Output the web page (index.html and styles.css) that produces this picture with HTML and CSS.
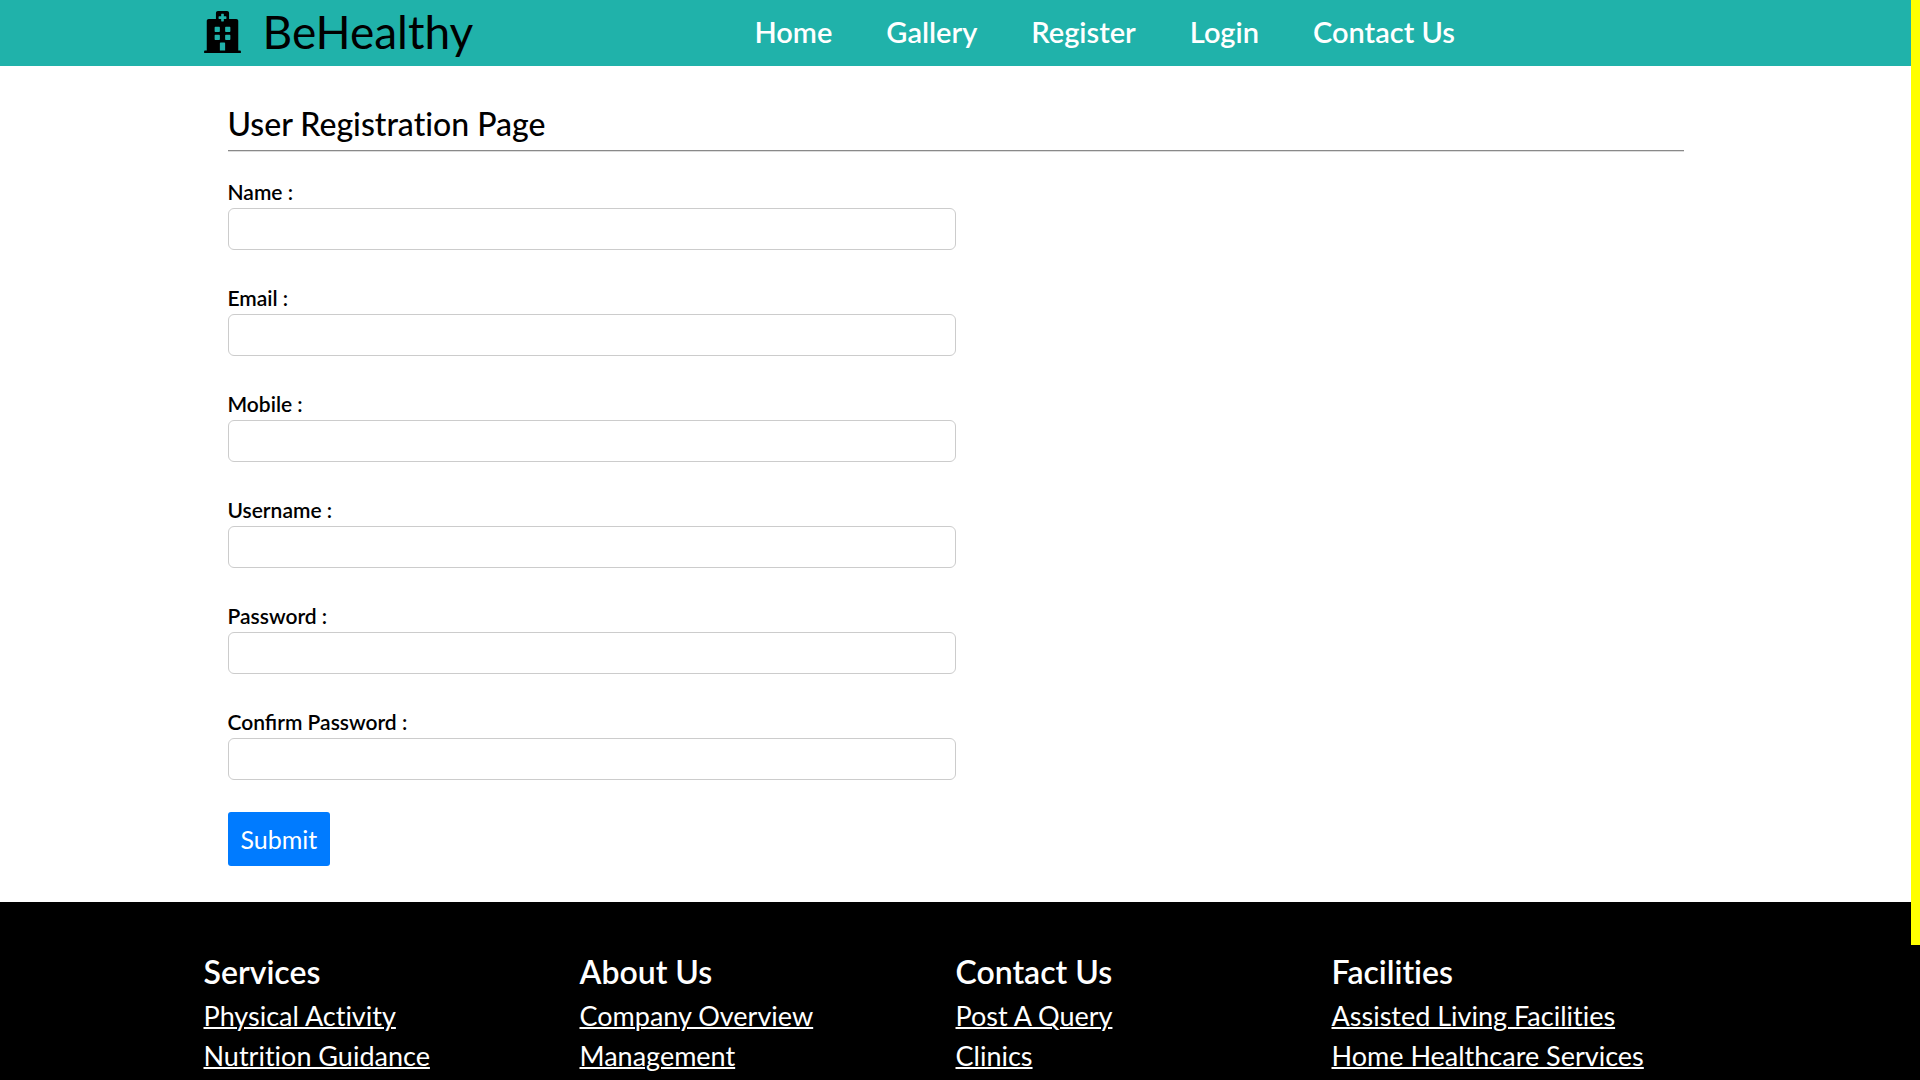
FILE: index.html
```html
<!DOCTYPE html>
<html lang="en">
<head>
<meta charset="utf-8">
<meta name="viewport" content="width=device-width, initial-scale=1">
<title>BeHealthy - Register</title>
<link rel="stylesheet" href="styles.css">
</head>
<body>
<header class="site-header">
  <div class="container header-row">
    <a class="brand" href="#">
      <svg class="brand-icon" viewBox="0 0 448 512" aria-hidden="true"><path fill="currentColor" d="M448 492v20H0v-20c0-6.627 5.373-12 12-12h20V120c0-13.255 10.745-24 24-24h88V24c0-13.255 10.745-24 24-24h112c13.255 0 24 10.745 24 24v72h88c13.255 0 24 10.745 24 24v360h20c6.627 0 12 5.373 12 12zM308 192h-40c-6.627 0-12 5.373-12 12v40c0 6.627 5.373 12 12 12h40c6.627 0 12-5.373 12-12v-40c0-6.627-5.373-12-12-12zm-168 64h40c6.627 0 12-5.373 12-12v-40c0-6.627-5.373-12-12-12h-40c-6.627 0-12 5.373-12 12v40c0 6.627 5.373 12 12 12zm104 128h-40c-6.627 0-12 5.373-12 12v84h64v-84c0-6.627-5.373-12-12-12zm64-96h-40c-6.627 0-12 5.373-12 12v40c0 6.627 5.373 12 12 12h40c6.627 0 12-5.373 12-12v-40c0-6.627-5.373-12-12-12zm-116 12c0-6.627-5.373-12-12-12h-40c-6.627 0-12 5.373-12 12v40c0 6.627 5.373 12 12 12h40c6.627 0 12-5.373 12-12v-40zM182 96h26v26a6 6 0 0 0 6 6h20a6 6 0 0 0 6-6V96h26a6 6 0 0 0 6-6V70a6 6 0 0 0-6-6h-26V38a6 6 0 0 0-6-6h-20a6 6 0 0 0-6 6v26h-26a6 6 0 0 0-6 6v20a6 6 0 0 0 6 6z"/></svg>
      <span>BeHealthy</span>
    </a>
    <nav class="main-nav">
      <a href="#">Home</a>
      <a href="#">Gallery</a>
      <a href="#">Register</a>
      <a href="#">Login</a>
      <a href="#">Contact Us</a>
    </nav>
  </div>
</header>

<main class="container registration">
  <h1>User Registration Page</h1>
  <form>
    <div class="field"><label for="name">Name :</label><input id="name" type="text"></div>
    <div class="field"><label for="email">Email :</label><input id="email" type="email"></div>
    <div class="field"><label for="mobile">Mobile :</label><input id="mobile" type="tel"></div>
    <div class="field"><label for="username">Username :</label><input id="username" type="text"></div>
    <div class="field"><label for="password">Password :</label><input id="password" type="password"></div>
    <div class="field"><label for="confirm">Confirm Password :</label><input id="confirm" type="password"></div>
    <button class="submit" type="submit">Submit</button>
  </form>
</main>

<footer class="site-footer">
  <div class="container footer-grid">
    <section>
      <h2>Services</h2>
      <ul><li><a href="#">Physical Activity</a></li><li><a href="#">Nutrition Guidance</a></li></ul>
    </section>
    <section>
      <h2>About Us</h2>
      <ul><li><a href="#">Company Overview</a></li><li><a href="#">Management</a></li></ul>
    </section>
    <section>
      <h2>Contact Us</h2>
      <ul><li><a href="#">Post A Query</a></li><li><a href="#">Clinics</a></li></ul>
    </section>
    <section>
      <h2>Facilities</h2>
      <ul><li><a href="#">Assisted Living Facilities</a></li><li><a href="#">Home Healthcare Services</a></li></ul>
    </section>
  </div>
</footer>
<div class="scroll-track" aria-hidden="true"><div class="scroll-thumb"></div></div>
</body>
</html>
```
FILE: styles.css
```css
* {
  box-sizing: border-box;
}

body {
  display: flex;
  flex-direction: column;
  min-height: 100vh;
  margin: 0;
  padding-right: 9px;
  background: #fff;
  color: #000;
  font-family: Lato, "Open Sans", sans-serif;
  font-variant-ligatures: no-common-ligatures;
}

.container {
  width: 100%;
  max-width: 1504px;
  margin: 0 auto;
}

.site-header {
  background: lightseagreen;
}

.header-row {
  display: flex;
  align-items: center;
  min-height: 66px;
  padding-bottom: 2px;
}

.brand {
  display: flex;
  flex: 0 0 551px;
  align-items: center;
  gap: 22px;
  color: #000;
  font-size: 46px;
  line-height: 62px;
  text-decoration: none;
}

.brand-icon {
  width: 37px;
  height: 42px;
}

.main-nav {
  display: flex;
  gap: 54px;
}

.main-nav a {
  color: #fff;
  font-size: 29px;
  font-weight: 600;
  line-height: 36px;
  text-decoration: none;
}

.registration {
  padding: 40px 24px 36px;
}

.registration h1 {
  margin: 0 0 26px;
  padding-bottom: 8px;
  border-bottom: 2px groove #ddd;
  font-size: 32px;
  font-weight: 500;
  line-height: 36px;
}

.field {
  display: flex;
  flex-direction: column;
  width: 50%;
  margin-bottom: 34px;
}

.field label {
  margin-bottom: 2px;
  font-size: 21px;
  font-weight: 600;
  line-height: 28px;
  font-variant-ligatures: normal;
}

.field input {
  width: 100%;
  height: 42px;
  padding: 8px;
  border: 1px solid #ccc;
  border-radius: 6px;
  background: #fff;
  font: inherit;
}

.field:last-of-type {
  margin-bottom: 32px;
}

.submit {
  display: block;
  padding: 12px 13px;
  border: 0;
  border-radius: 3px;
  background: #007bff;
  color: #fff;
  font-family: Lato, sans-serif;
  font-size: 25px;
  line-height: 30px;
}

.site-footer {
  flex: 1;
  padding: 50px 0 0;
  background: #000;
  color: #fff;
}

.footer-grid {
  display: grid;
  grid-template-columns: repeat(4, 1fr);
}

.footer-grid h2 {
  margin: 0 0 4px;
  font-size: 32px;
  font-weight: 600;
  line-height: 40px;
}

.footer-grid ul {
  margin: 0;
  padding: 0;
  list-style: none;
}

.footer-grid a {
  color: #fff;
  font-size: 27px;
  line-height: 40px;
  text-decoration-thickness: 2px;
}

.scroll-track {
  position: fixed;
  top: 0;
  right: 0;
  bottom: 0;
  width: 9px;
  background: #000;
}

.scroll-thumb {
  height: 87.5%;
  background: #ff0;
}
```
